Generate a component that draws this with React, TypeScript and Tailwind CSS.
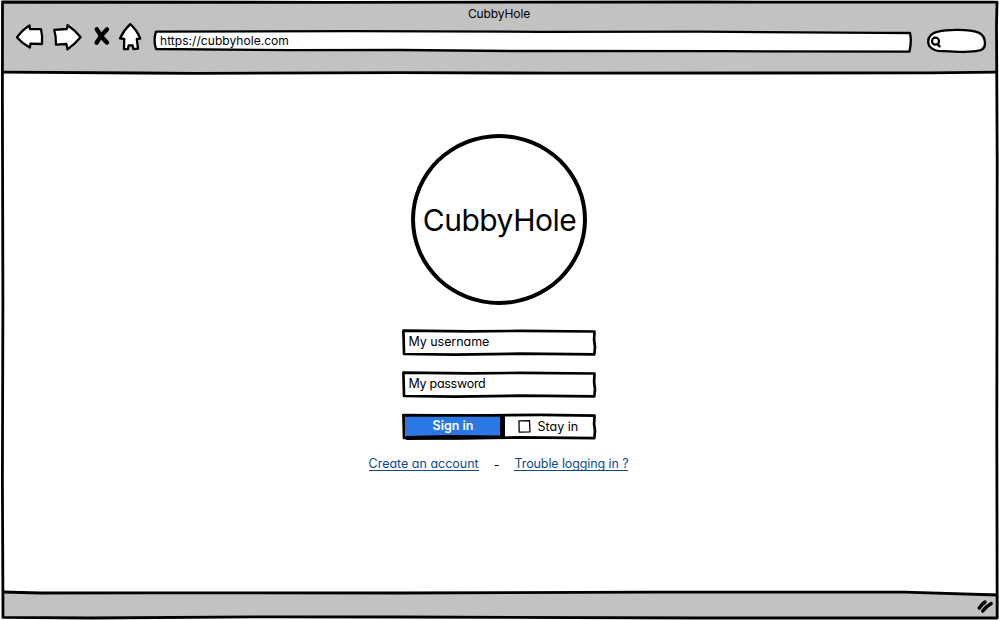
import type { ReactNode } from "react";

const font = "font-['Inter','Noto_Sans',sans-serif] [font-feature-settings:'cv11']";

function WindowOutline() {
  return (
    <svg className="pointer-events-none absolute inset-0" width="999" height="620" viewBox="0 0 999 620" fill="none" stroke="#000" strokeWidth="2.8" strokeLinejoin="round">
      <path d="M2.5 2 L330 2.3 L700 2 L997 2.2 L996.5 26 L997.2 160 L996.8 430 L997.2 618 L700 618 L400 617 L260 616.8 L90 618 L3 617.4 L2.4 480 L2.9 300 L2.4 100 Z" />
      <path d="M3 72.2 L140 73 L195 73.4 L400 72.6 L560 73.2 L930 72.8 L997 72.2" strokeWidth="2.8" />
      <path d="M3 592 L40 593 L150 592.8 L400 593 L650 592.2 L905 592.2 L997 595" strokeWidth="2.8" />
    </svg>
  );
}

function Toolbar() {
  return (
    <svg className="shrink-0" width="130" height="32" viewBox="14 21 130 32" fill="#fff" stroke="#000" strokeWidth="2.3" strokeLinejoin="round" strokeLinecap="round">
      <path d="M17 37.4 Q22 30 29.5 25.4 L30 29.2 L41 29.2 Q42.8 36 42 44 L30.5 43.6 L29.8 47.6 Q22.5 43.5 17 37.4 Z" />
      <path d="M54.2 29.8 L66.8 29 L67.6 25.2 Q75 30 80.6 37.3 Q75 44 67.5 49.4 L66.4 44 L56 44.6 Q56.2 36 54.2 29.8 Z" />
      <path d="M96.8 29.2 Q100.5 36.5 107 42.6 M107 29.4 Q101.5 34.5 96.6 42.6" strokeWidth="4.4" />
      <path d="M130.2 24.2 Q137 30 140.2 38.6 L136.8 39 L138 48.6 L133.4 49 L132.6 45.4 L128.6 45.4 L128 49 L124 49.2 L124.2 39 L120 38.4 Q124 30 130.2 24.2 Z" />
    </svg>
  );
}

function AddressBar() {
  return (
    <div className="relative mt-[9px] ml-[9px] h-[23px] w-[760px]">
      <svg className="absolute inset-0" width="760" height="23" viewBox="153 30 760 23" fill="#fff" stroke="#000" strokeWidth="2.3" strokeLinejoin="round">
        <path d="M156 31.6 L350 31.2 L540 31.8 L700 31.7 L880 32.8 L910 33 Q911.8 41 909.5 51.6 L720 51.2 L510 51 L400 50 L290 50.1 L156 49 Q153.2 40 156 31.6 Z" />
      </svg>
      <span className="absolute left-[7px] top-[2px] text-[12px] leading-[18px] tracking-[0.05px] whitespace-nowrap">https://cubbyhole.com</span>
    </div>
  );
}

function SearchBox() {
  return (
    <svg className="mt-[6px] ml-[13px] shrink-0" width="62" height="28" viewBox="926 27 62 28" fill="#fff" stroke="#000" strokeWidth="2.3" strokeLinecap="round">
      <path d="M938 31.6 C948 29 970 29.2 978 32.4 C983 34.4 985 38 985 43.5 C985 49.5 981 50.6 973 51.4 C964 52.6 953 51.2 942 51.2 C933 51.2 928.2 47 928.2 41.4 C928.2 36 932 33 938 31.6 Z" />
      <circle cx="935.5" cy="41.2" r="3.5" strokeWidth="2.2" />
      <path d="M937.8 44.2 L939.5 46.3" strokeWidth="2.4" />
    </svg>
  );
}

function Field({ children }: { children: ReactNode }) {
  return (
    <div className="relative h-[28px] w-[196px]">
      <svg className="absolute inset-0" width="196" height="28" viewBox="401 329 196 28" fill="#fff" stroke="#000" strokeWidth="2.7" strokeLinejoin="round">
        <path d="M403.4 330.7 L470 331.4 L520 330.9 L594.5 331.5 L594.1 340 L595 347 L594.3 354.4 L520 353.7 L455 354.7 L404 354 L403.8 345 Z" />
      </svg>
      {children}
    </div>
  );
}

function ActionRow() {
  return (
    <div className="relative h-[28px] w-[196px]">
      <svg className="absolute inset-0" width="196" height="28" viewBox="401 413 196 28" fill="#fff" stroke="#000" strokeWidth="2.7" strokeLinejoin="round">
        <path d="M403.4 415 L470 415.5 L540 414.9 L594.5 415.6 L594.1 424 L595 431 L594.3 438.1 L520 437.4 L455 438.5 L404 438 L403.8 429 Z" />
        <path d="M404 415.3 L502 415.6 L502.8 437.4 L407 438.6 Z" fill="#000" />
        <path d="M405 416.8 L500 416.8 L500 435.4 L450 434.9 L405 436 Z" fill="#2b78e4" stroke="none" />
        <path d="M503.2 415.5 L503.2 437.5" strokeWidth="3.6" />
        <path d="M519 420.9 L529.5 420.7 L530 431.8 L519.2 432.2 Z" strokeWidth="1.3" />
      </svg>
      <span className="absolute left-[32px] top-[3px] text-[12.5px] leading-[20px] font-semibold text-white whitespace-nowrap">Sign in</span>
      <span className="absolute left-[137px] top-[4px] text-[12.5px] leading-[20px] whitespace-nowrap">Stay in</span>
    </div>
  );
}

export default function App() {
  return (
    <div className={`${font} relative flex h-[620px] w-[999px] flex-col overflow-hidden bg-white text-black`}>
      <header className="mx-[2px] mt-[2px] h-[70px] bg-[#c2c2c2]">
        <h1 className="h-[23px] pr-px text-center text-[12px] leading-[23px] tracking-[-0.1px]">CubbyHole</h1>
        <div className="-mt-[4px] flex h-[36px] items-start pl-[12px]">
          <Toolbar />
          <AddressBar />
          <SearchBox />
        </div>
      </header>
      <main className="flex h-[521px] flex-col items-center pt-[62px] pr-[2px]">
        <div className="flex h-[171px] w-[176px] items-center justify-center rounded-[50%] border-4 border-black">
          <span className="pl-[2px] text-[30px] leading-[40px] tracking-[-0.5px] whitespace-nowrap">CubbyHole</span>
        </div>
        <div className="mt-[24px] flex flex-col gap-[14px]">
          <Field>
            <span className="absolute left-[8px] top-[3px] text-[12.5px] leading-[20px] tracking-[-0.05px] whitespace-nowrap">My username</span>
          </Field>
          <Field>
            <span className="absolute left-[8px] top-[3px] text-[12.5px] leading-[20px] tracking-[-0.28px] whitespace-nowrap">My password</span>
          </Field>
          <ActionRow />
        </div>
        <nav className="mt-[13px] flex h-[20px] w-[260px] justify-between text-[12.5px] leading-[19px] text-[#114a8b]">
          <a className="h-[17px] border-b border-[#0b4f8a] whitespace-nowrap">Create an account</a>
          <span className="pt-[1px] text-black">-</span>
          <a className="h-[17px] border-b border-[#0b4f8a] tracking-[-0.1px] whitespace-nowrap">Trouble logging in ?</a>
        </nav>
      </main>
      <footer className="mx-[2px] flex h-[25px] items-center justify-end bg-[#c2c2c2] pr-[3px]">
        <svg width="18" height="16" viewBox="976 599 18 16" fill="none" stroke="#000" strokeWidth="3.4" strokeLinecap="round">
          <path d="M979.2 609 Q981.5 605.5 985 603 M982.8 612 Q986 607.5 991.2 604.5" />
        </svg>
      </footer>
      <WindowOutline />
    </div>
  );
}
